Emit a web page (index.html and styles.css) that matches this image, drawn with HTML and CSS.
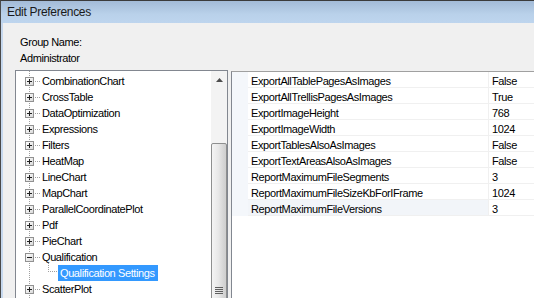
FILE: index.html
```html
<!DOCTYPE html>
<html>
<head>
<meta charset="utf-8">
<link rel="stylesheet" href="styles.css">
</head>
<body>
<div class="window">
  <div class="titlebar">Edit Preferences</div>
  <div class="content">
    <div class="group">
      <div class="group-label">Group Name:</div>
      <div class="group-value">Administrator</div>
    </div>
    <div class="panes">
      <div class="tree">
        <div class="tree-list">
          <div class="node"><span class="box plus"></span><span class="hconn"></span><span class="label">CombinationChart</span></div>
          <div class="node"><span class="box plus"></span><span class="hconn"></span><span class="label">CrossTable</span></div>
          <div class="node"><span class="box plus"></span><span class="hconn"></span><span class="label">DataOptimization</span></div>
          <div class="node"><span class="box plus"></span><span class="hconn"></span><span class="label">Expressions</span></div>
          <div class="node"><span class="box plus"></span><span class="hconn"></span><span class="label">Filters</span></div>
          <div class="node"><span class="box plus"></span><span class="hconn"></span><span class="label">HeatMap</span></div>
          <div class="node"><span class="box plus"></span><span class="hconn"></span><span class="label">LineChart</span></div>
          <div class="node"><span class="box plus"></span><span class="hconn"></span><span class="label">MapChart</span></div>
          <div class="node"><span class="box plus"></span><span class="hconn"></span><span class="label">ParallelCoordinatePlot</span></div>
          <div class="node"><span class="box plus"></span><span class="hconn"></span><span class="label">Pdf</span></div>
          <div class="node"><span class="box plus"></span><span class="hconn"></span><span class="label">PieChart</span></div>
          <div class="node"><span class="box minus"></span><span class="hconn"></span><span class="label">Qualification</span></div>
          <div class="node child"><span class="elbow"></span><span class="label selected">Qualification Settings</span></div>
          <div class="node"><span class="box plus"></span><span class="hconn"></span><span class="label">ScatterPlot</span></div>
        </div>
        <div class="scrollbar">
          <div class="arrow-up"><svg width="7" height="4" viewBox="0 0 7 4"><path d="M0 4 L3.5 0 L7 4 Z" fill="#4d4d4d"/></svg></div>
          <div class="track-gap"></div>
          <div class="thumb"><div class="grip"><i></i><i></i><i></i><i></i></div></div>
        </div>
      </div>
      <div class="grid">
        <div class="row"><span class="gutter"></span><span class="name">ExportAllTablePagesAsImages</span><span class="value">False</span></div>
        <div class="row"><span class="gutter"></span><span class="name">ExportAllTrellisPagesAsImages</span><span class="value">True</span></div>
        <div class="row"><span class="gutter"></span><span class="name">ExportImageHeight</span><span class="value">768</span></div>
        <div class="row"><span class="gutter"></span><span class="name">ExportImageWidth</span><span class="value">1024</span></div>
        <div class="row"><span class="gutter"></span><span class="name">ExportTablesAlsoAsImages</span><span class="value">False</span></div>
        <div class="row"><span class="gutter"></span><span class="name">ExportTextAreasAlsoAsImages</span><span class="value">False</span></div>
        <div class="row"><span class="gutter"></span><span class="name">ReportMaximumFileSegments</span><span class="value">3</span></div>
        <div class="row"><span class="gutter"></span><span class="name">ReportMaximumFileSizeKbForIFrame</span><span class="value">1024</span></div>
        <div class="row current"><span class="gutter"></span><span class="name">ReportMaximumFileVersions</span><span class="value">3</span></div>
      </div>
    </div>
  </div>
</div>
</body>
</html>
```

FILE: styles.css
```css
* { box-sizing: border-box; }
html, body { margin: 0; padding: 0; }
body {
  width: 534px;
  height: 298px;
  overflow: hidden;
  background: #f0f0f0;
  font-family: "Liberation Sans", Arial, sans-serif;
  font-size: 11px;
  letter-spacing: -0.4px;
  color: #000;
}
.window {
  width: 534px;
  height: 298px;
  overflow: hidden;
  border-top: 1px solid #3b3b3b;
  border-left: 1px solid #4a4a4a;
  display: flex;
  flex-direction: column;
}
.titlebar {
  height: 22px;
  flex: none;
  background: linear-gradient(to bottom, #a3bbd7, #b9d1ea 60%, #bed5ee);
  font-size: 12px;
  letter-spacing: -0.3px;
  line-height: 22px;
  padding-left: 6px;
  color: #1a1a1a;
}
.content {
  flex: 1;
  background: #f0f0f0;
  border-left: 2px solid #c6d8ee;
  padding: 12px 0 0 12px;
  display: flex;
  flex-direction: column;
  min-height: 0;
}
.group { padding-left: 5px; line-height: 15px; }
.group-value { margin-top: 1px; }
.panes {
  margin-top: 4px;
  display: flex;
  align-items: flex-start;
  gap: 3px;
}
.tree {
  width: 213px;
  height: 240px;
  flex: none;
  border: 1px solid #828790;
  border-bottom: none;
  background: #fff;
  display: flex;
}
.tree-list {
  flex: 1;
  padding-top: 2px;
  background-image: repeating-linear-gradient(to bottom, #a0a0a0 0 1px, transparent 1px 2px);
  background-size: 1px 100%;
  background-position: 13px 0;
  background-repeat: no-repeat;
}
.node {
  height: 16px;
  display: flex;
  align-items: center;
  padding-left: 9px;
  white-space: nowrap;
}
.box {
  width: 9px;
  height: 9px;
  flex: none;
  border: 1px solid #919191;
}
.box.plus {
  background:
    linear-gradient(#1f1f1f, #1f1f1f) center / 5px 1px no-repeat,
    linear-gradient(#1f1f1f, #1f1f1f) center / 1px 5px no-repeat,
    linear-gradient(to bottom right, #ffffff, #d9d9d9);
}
.box.minus {
  background:
    linear-gradient(#1f1f1f, #1f1f1f) center / 5px 1px no-repeat,
    linear-gradient(to bottom right, #ffffff, #d9d9d9);
}
.hconn {
  width: 6px;
  height: 1px;
  flex: none;
  background-image: repeating-linear-gradient(to right, transparent 0 1px, #a0a0a0 1px 2px);
}
.label {
  padding-left: 2px;
  line-height: 16px;
}
.node.child { padding-left: 32px; }
.elbow {
  width: 10px;
  height: 16px;
  flex: none;
  background:
    repeating-linear-gradient(to bottom, #a0a0a0 0 1px, transparent 1px 2px) 0 0 / 1px 8px no-repeat,
    repeating-linear-gradient(to right, #a0a0a0 0 1px, transparent 1px 2px) 0 8px / 10px 1px no-repeat;
  margin-top: -4px;
}
.label.selected {
  background: #3399ff;
  color: #fff;
  padding: 0 3px 0 2px;
}
.scrollbar {
  width: 16px;
  flex: none;
  background: #f3f3f3;
  display: flex;
  flex-direction: column;
}
.arrow-up {
  height: 17px;
  flex: none;
  display: flex;
  align-items: center;
  justify-content: center;
}
.track-gap { height: 55px; flex: none; }
.thumb {
  height: 294px;
  flex: none;
  border: 1px solid #8e8f8f;
  border-radius: 2px;
  background: linear-gradient(to right, #f4f4f4 0, #e8e8e8 45%, #d6d6d6 80%, #cfcfcf);
  display: flex;
  align-items: center;
  justify-content: center;
}
.grip { display: flex; flex-direction: column; gap: 1px; }
.grip i { display: block; width: 8px; height: 1px; background: #5f5f5f; }
.grid {
  flex: 1;
  margin-top: 1px;
  height: 240px;
  border-left: 1px solid #828790;
  border-top: 1px solid #a0a0a0;
  background: #fff;
}
.row {
  height: 16px;
  display: flex;
  white-space: nowrap;
  line-height: 14px;
}
.gutter {
  width: 16px;
  flex: none;
  background: #f4f7fb;
}
.name {
  width: 241px;
  flex: none;
  padding: 2px 0 0 3px;
  border-bottom: 1px solid #f0f0f0;
  border-right: 1px solid #f0f0f0;
}
.value {
  flex: 1;
  padding: 2px 0 0 3px;
  border-bottom: 1px solid #f0f0f0;
}
.row.current .name { background: #f2f5f9; }
```
